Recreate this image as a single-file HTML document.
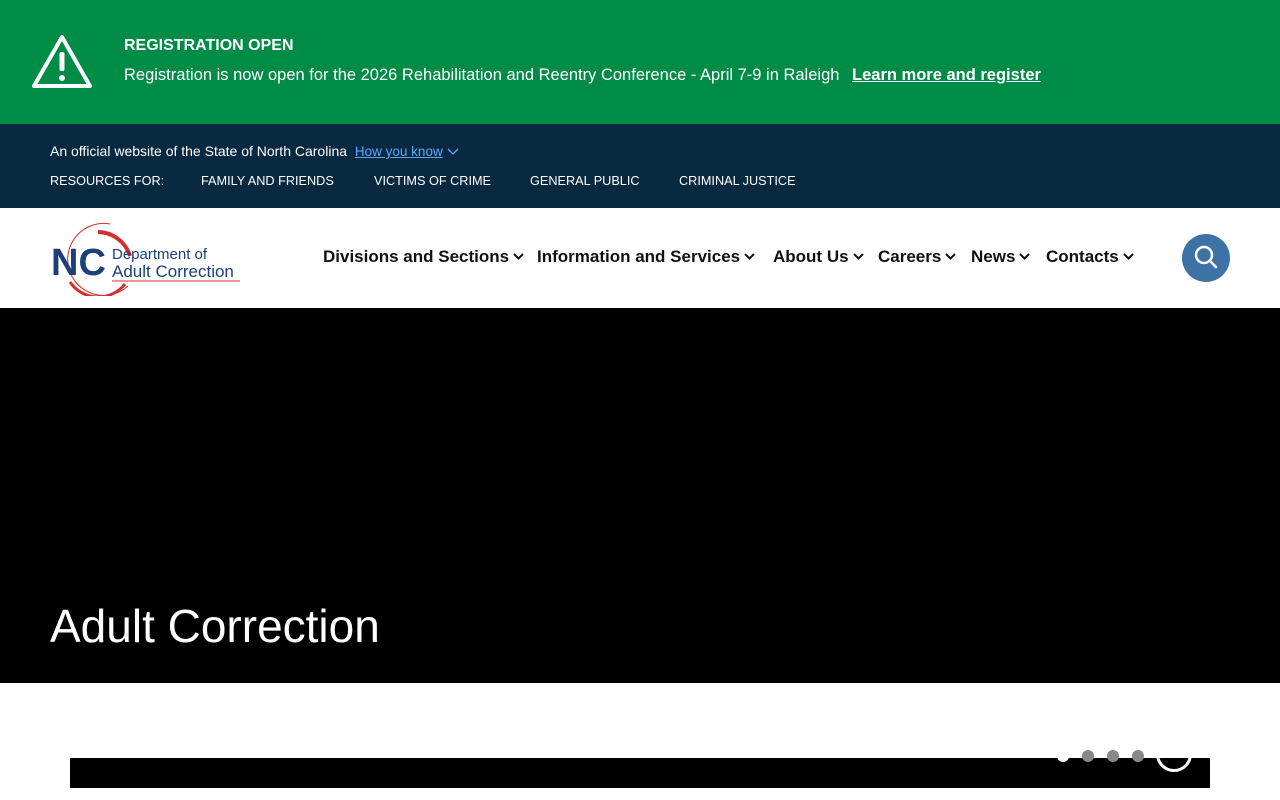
<!DOCTYPE html>
<html><head><style>
*{margin:0;padding:0;box-sizing:border-box}
body{width:1280px;height:800px;overflow:hidden;background:#fff;font-family:"Liberation Sans",sans-serif;position:relative}
.alert{position:absolute;left:0;top:0;width:1280px;height:124px;background:#008b47;color:#fff}
.alert .t{position:absolute;left:124px;top:37px;font-weight:bold;font-size:16px}
.alert .m{position:absolute;left:124px;top:66px;font-size:16.5px;white-space:nowrap}
.alert .m a{font-weight:bold;color:#fff;text-decoration:underline;margin-left:8px;font-size:16.5px}
.gov{position:absolute;left:0;top:124px;width:1280px;height:84px;background:#092940;color:#fff;font-size:14px}
.gov .a{position:absolute;left:50px;top:19px;white-space:nowrap}
.gov .a span{color:#5aa9ff;text-decoration:underline;margin-left:4px;font-size:13.5px}
.gov .r{position:absolute;top:50px;font-size:12.7px;white-space:nowrap}
.hdr{position:absolute;top:208px;left:0;width:1280px;height:100px}
.nav{position:absolute;top:39px;font-size:17px;font-weight:bold;color:#111;white-space:nowrap}
.nav svg{margin-left:4px;vertical-align:2px}
.srch{position:absolute;left:1182px;top:26px;width:48px;height:48px;border-radius:50%;background:#3d72a6}
.hero{position:absolute;top:308px;left:0;width:1280px;height:375px;background:#000}
.hero h1{position:absolute;left:50px;top:291px;color:#fff;font-size:46px;font-weight:normal}
.box{position:absolute;left:70px;top:758px;width:1140px;height:30px;background:#000}
.dot{position:absolute;top:750px;width:12px;height:12px;border-radius:50%;background:#888}
</style></head><body>
<div class="alert">
<svg style="position:absolute;left:31px;top:34px" width="62" height="56" viewBox="0 0 62 56"><path d="M31 3 L59 52 H3 Z" fill="none" stroke="#fff" stroke-width="4" stroke-linejoin="round"/><rect x="28.5" y="18" width="5" height="19" rx="2" fill="#fff"/><circle cx="31" cy="44" r="3" fill="#fff"/></svg>
<div class="t">REGISTRATION OPEN</div>
<div class="m">Registration is now open for the 2026 Rehabilitation and Reentry Conference - April 7-9 in Raleigh <a>Learn more and register</a></div>
</div>
<div class="gov">
<div class="a">An official website of the State of North Carolina <span>How you know</span> <svg width="12" height="8" viewBox="0 0 12 8"><path d="M1 1 L6 6 L11 1" fill="none" stroke="#5aa9ff" stroke-width="1.3"/></svg></div>
<div class="r" style="left:50px">RESOURCES FOR:</div>
<div class="r" style="left:201px">FAMILY AND FRIENDS</div>
<div class="r" style="left:374px">VICTIMS OF CRIME</div>
<div class="r" style="left:530px">GENERAL PUBLIC</div>
<div class="r" style="left:679px">CRIMINAL JUSTICE</div>
</div>
<div class="hdr">
<svg style="position:absolute;left:50px;top:12px" width="200" height="76" viewBox="0 0 200 76"><path d="M60 4 A36 36 0 1 0 78 66" fill="none" stroke="#d32f2f" stroke-width="1"/><path d="M48 12 A34 34 0 0 1 80 36" fill="none" stroke="#d32f2f" stroke-width="4"/><path d="M20 62 A34 34 0 0 0 75 64" fill="none" stroke="#d32f2f" stroke-width="3"/><text x="1" y="55" font-family="Liberation Sans" font-weight="bold" font-size="38" fill="#1c3f7a">NC</text><text x="62" y="39" font-family="Liberation Sans" font-size="15" fill="#1c3f7a">Department of</text><text x="62" y="57" font-family="Liberation Sans" font-size="17" fill="#1c3f7a">Adult Correction</text><line x1="62" y1="61" x2="190" y2="61" stroke="#d32f2f" stroke-width="1"/></svg>
<div class="nav" style="left:323px">Divisions and Sections<svg width="11" height="7" viewBox="0 0 11 7"><path d="M1 1 L5.5 5.5 L10 1" fill="none" stroke="#111" stroke-width="2"/></svg></div>
<div class="nav" style="left:537px">Information and Services<svg width="11" height="7" viewBox="0 0 11 7"><path d="M1 1 L5.5 5.5 L10 1" fill="none" stroke="#111" stroke-width="2"/></svg></div>
<div class="nav" style="left:773px">About Us<svg width="11" height="7" viewBox="0 0 11 7"><path d="M1 1 L5.5 5.5 L10 1" fill="none" stroke="#111" stroke-width="2"/></svg></div>
<div class="nav" style="left:878px">Careers<svg width="11" height="7" viewBox="0 0 11 7"><path d="M1 1 L5.5 5.5 L10 1" fill="none" stroke="#111" stroke-width="2"/></svg></div>
<div class="nav" style="left:971px">News<svg width="11" height="7" viewBox="0 0 11 7"><path d="M1 1 L5.5 5.5 L10 1" fill="none" stroke="#111" stroke-width="2"/></svg></div>
<div class="nav" style="left:1046px">Contacts<svg width="11" height="7" viewBox="0 0 11 7"><path d="M1 1 L5.5 5.5 L10 1" fill="none" stroke="#111" stroke-width="2"/></svg></div>
<div class="srch"><svg width="48" height="48" viewBox="0 0 48 48"><circle cx="22" cy="21" r="8" fill="none" stroke="#fff" stroke-width="2.5"/><line x1="28" y1="27" x2="34" y2="33" stroke="#fff" stroke-width="2.5" stroke-linecap="round"/></svg></div>
</div>
<div class="hero"><h1>Adult Correction</h1></div>
<div class="box"></div>
<div class="dot" style="left:1057px;background:#fff"></div>
<div class="dot" style="left:1082px"></div>
<div class="dot" style="left:1107px"></div>
<div class="dot" style="left:1132px"></div>
<div style="position:absolute;left:1156px;top:736px;width:36px;height:36px;border-radius:50%;border:3px solid #fff"></div>
</body></html>
